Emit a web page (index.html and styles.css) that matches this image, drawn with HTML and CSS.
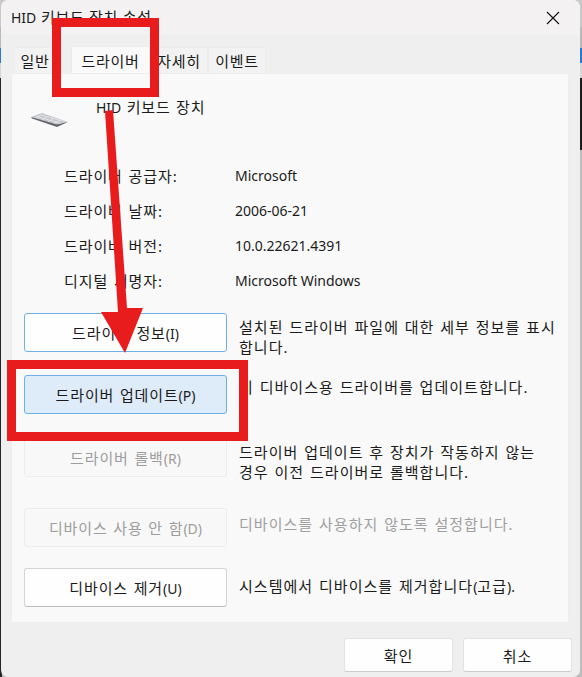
FILE: index.html
```html
<!DOCTYPE html>
<html lang="ko">
<head>
<meta charset="utf-8">
<title>HID 키보드 장치 속성</title>
<link rel="stylesheet" href="styles.css">
</head>
<body>
<div class="window">
  <header class="titlebar">
    <span class="title"><span class="lat">HID</span> 키보드 장치 속성</span>
    <svg class="close" width="14" height="14" viewBox="0 0 14 14"><path d="M1 1L13 13M13 1L1 13" stroke="#111" stroke-width="1.1" fill="none"/></svg>
  </header>
  <nav class="tabs">
    <span class="tab first">일반</span>
    <span class="tab active">드라이버</span>
    <span class="tab">자세히</span>
    <span class="tab">이벤트</span>
  </nav>
  <main class="panel">
    <div class="device">
      <svg class="kbd" width="40" height="16" viewBox="0 0 40 16">
        <path d="M1 5L12 1L38 10L27 14Z" fill="#c3c6ca"/>
        <path d="M1 5L27 12.6L38 10L27 15L2 6.5Z" fill="#62666b"/>
        <path d="M7 4.6L31 11.4M11 3L35 9.8M11 3L6 6M17 5L12 8M23 6.8L18 9.8M29 8.6L24 11.6" stroke="#eceef0" stroke-width=".7" fill="none"/>
      </svg>
      <span class="device-name"><span class="lat">HID</span> 키보드 장치</span>
    </div>
    <dl class="info">
      <div class="row"><dt>드라이버 공급자:</dt><dd>Microsoft</dd></div>
      <div class="row"><dt>드라이버 날짜:</dt><dd>2006-06-21</dd></div>
      <div class="row"><dt>드라이버 버전:</dt><dd>10.0.22621.4391</dd></div>
      <div class="row"><dt>디지털 서명자:</dt><dd>Microsoft Windows</dd></div>
    </dl>
    <div class="actions">
      <div class="action a-info"><button class="btn">드라이버 정보<span class="lat">(I)</span></button><p>설치된 드라이버 파일에 대한 세부 정보를 표시<br>합니다.</p></div>
      <div class="action a-update"><button class="btn hot">드라이버 업데이트<span class="lat">(P)</span></button><p>이 디바이스용 드라이버를 업데이트합니다.</p></div>
      <div class="action a-rollback"><button class="btn off">드라이버 롤백<span class="lat">(R)</span></button><p>드라이버 업데이트 후 장치가 작동하지 않는<br>경우 이전 드라이버로 롤백합니다.</p></div>
      <div class="action a-disable"><button class="btn off">디바이스 사용 안 함<span class="lat">(D)</span></button><p class="dim">디바이스를 사용하지 않도록 설정합니다.</p></div>
      <div class="action a-remove"><button class="btn plain">디바이스 제거<span class="lat">(U)</span></button><p>시스템에서 디바이스를 제거합니다<span class="lat">(</span>고급<span class="lat">).</span></p></div>
    </div>
  </main>
  <footer class="footer">
    <button class="btn foot">확인</button>
    <button class="btn foot">취소</button>
  </footer>
</div>
<div class="mark mark-tab"></div>
<div class="mark mark-btn"></div>
<svg class="arrow" width="582" height="677" viewBox="0 0 582 677">
  <path d="M105 111L113 110L127 308L143 308L125 353L101 312L118 312Z" fill="#e81c1c"/>
</svg>
</body>
</html>
```
FILE: styles.css
```css
* { box-sizing: border-box; }
html, body { margin: 0; height: 100%; }
body {
  width: 582px; height: 677px; overflow: hidden; position: relative;
  background:
    linear-gradient(to right, #262626 2px, transparent 2px) 0 78px / 100% 100% no-repeat,
    linear-gradient(#c9c9c9 0 27px, #b9b9b9 27px 48px, #2a78d0 48px 63px, #d5d5d5 63px 78px, #1c1c1c 78px 150px, #bdbdbd 150px);
  font-family: "Noto Sans", "Noto Sans CJK KR", sans-serif;
  font-size: 15px; letter-spacing: .7px; color: #1b1b1b;
}
.lat { font-size: 14px; letter-spacing: 0; word-spacing: 0; }
.window {
  margin-left: 1px; width: 579px; height: 677px;
  background: #efefef; border-radius: 7px;
  display: flex; flex-direction: column;
}
.titlebar {
  height: 35px; flex: none; background: #f3f1f2; border-radius: 7px 7px 0 0;
  display: flex; align-items: center; justify-content: space-between;
  padding: 0 20px 0 10px;
}
.title { position: relative; top: -1px; }
.close { display: block; }
.tabs { height: 38px; flex: none; display: flex; align-items: flex-end; padding-left: 12px; }
.tab {
  height: 26px; width: 58px; background: #f2f2f2; border: 1px solid #ececec; border-bottom: 0;
  display: flex; align-items: center; justify-content: center;
}
.tab.first { width: 44px; margin-right: 14px; }
.tab.active { height: 27px; width: 79px; background: #f9f9f9; }
.panel {
  width: 558px; margin-left: 10px; height: 550px; flex: none;
  background: #f9f9f9; border: 1px solid #ededed; padding: 24px 13px 0 12px;
}
.device { display: flex; align-items: flex-start; height: 68px; padding-left: 6px; gap: 26px; }
.kbd { display: block; margin-top: 14px; flex: none; }
.device-name { line-height: 20px; margin-top: -1px; letter-spacing: .9px; word-spacing: .5px; }
.info { margin: 0; padding: 0 0 0 40px; }
.row { display: flex; height: 35px; align-items: flex-start; }
.row dt { width: 171px; line-height: 20px; word-spacing: 1px; letter-spacing: .9px; }
.row dd { margin: 0; line-height: 20px; font-size: 14px; letter-spacing: 0; }
.actions { margin-top: 7px; display: flex; flex-direction: column; }
.action { display: flex; gap: 12px; height: 39px; align-items: flex-start; }
.action p { margin: 0; flex: 1; line-height: 20px; letter-spacing: 1.03px; word-spacing: .9px; white-space: nowrap; }
.action p.dim { color: #a0a0a0; }
.a-info p { margin-top: 4px; }
.a-update { margin-top: 23px; }
.a-update p { margin-top: 2px; }
.a-rollback { margin-top: 24px; }
.a-rollback p { margin-top: 4px; }
.a-disable { margin-top: 31px; }
.a-disable p { margin-top: 6px; }
.a-remove { margin-top: 21px; }
.a-remove p { margin-top: 8px; }
.btn {
  font: inherit; letter-spacing: .85px; word-spacing: 1px; width: 203px; height: 39px; flex: none; border-radius: 3px;
  border: 1px solid #6fb0e8; background: #fefefe; color: #1b1b1b; padding: 0;
}
.btn.hot { background: #deebf8; }
.btn.off { background: #f8f8f8; border-color: #ececec; color: #9d9d9d; }
.btn.plain { border-color: #d4d4d4; border-bottom-color: #bdbdbd; }
.footer { flex: 1; display: flex; gap: 10px; padding: 15px 0 0 343px; }
.btn.foot { width: 109px; height: 34px; border-color: #e3e3e3; border-bottom-color: #cdcdcd; }
.mark { position: absolute; border: 9px solid #e81c1c; }
.mark-tab { left: 52px; top: 18px; width: 107px; height: 79px; }
.mark-btn { left: 7px; top: 360px; width: 241px; height: 81px; }
.arrow { position: absolute; left: 0; top: 0; }
```
